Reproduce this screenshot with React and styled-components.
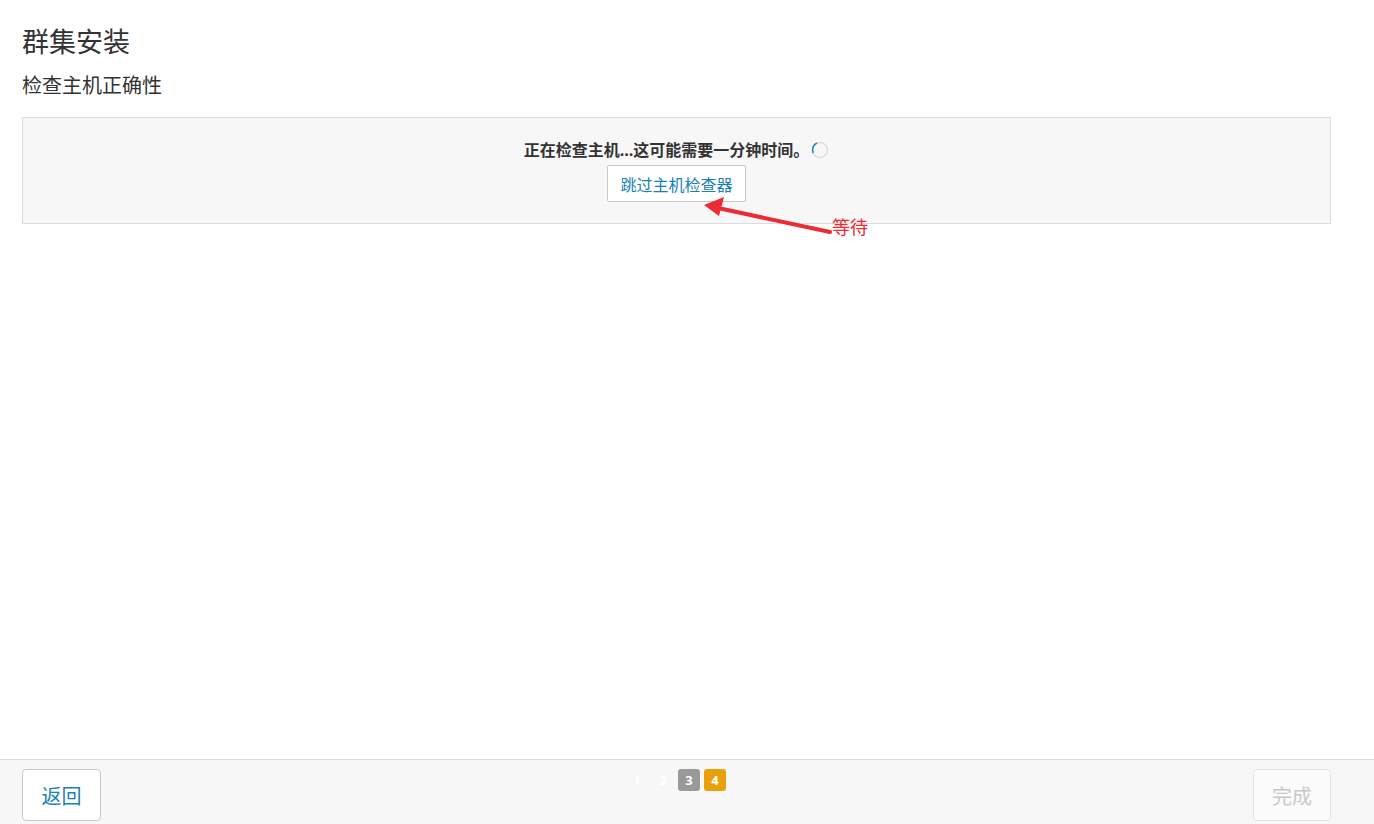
import React from "react";
import styled, { createGlobalStyle } from "styled-components";

const GlobalStyle = createGlobalStyle`
  *, *::before, *::after {
    box-sizing: border-box;
  }
  html, body {
    margin: 0;
    padding: 0;
    background: #fff;
    font-family: "Open Sans", "Noto Sans CJK SC", sans-serif;
    color: #333;
  }
`;

const Page = styled.div`
  height: 100vh;
  display: flex;
  flex-direction: column;
  overflow: hidden;
`;

const Main = styled.div`
  flex: 1;
  padding: 25px 43px 0 22px;
`;

const Title = styled.h1`
  margin: 0;
  font-size: 27px;
  line-height: 33px;
  font-weight: 400;
  color: #333;
`;

const SubTitle = styled.h2`
  margin: 16px 0 0;
  font-size: 20px;
  line-height: 24px;
  font-weight: 400;
  color: #333;
`;

const Panel = styled.div`
  position: relative;
  margin-top: 19px;
  background: #f7f7f7;
  border: 1px solid #dcdcdc;
  padding: 22px 0 21px;
  display: flex;
  flex-direction: column;
  align-items: center;
  gap: 5px;
`;

const Status = styled.div`
  display: flex;
  align-items: center;
  gap: 2px;
  font-size: 16px;
  line-height: 20px;
  font-weight: 700;
  color: #333;
`;

const SkipButton = styled.button`
  height: 37px;
  width: 139px;
  padding: 0;
  background: #fff;
  border: 1px solid #c8c8c8;
  border-radius: 2px;
  font-family: inherit;
  font-size: 16px;
  color: #1a7fb5;
  cursor: pointer;
`;

const Note = styled.div`
  position: absolute;
  left: 659px;
  top: 78px;
  display: flex;
  align-items: flex-start;
`;

const NoteText = styled.span`
  margin-top: 20px;
  margin-left: -2px;
  font-size: 18px;
  line-height: 22px;
  color: #ec2b35;
`;

const Footer = styled.div`
  height: 65px;
  flex-shrink: 0;
  border-top: 1px solid #dcdcdc;
  background: #f7f7f7;
  padding: 9px 43px 0 22px;
  display: flex;
  justify-content: space-between;
  align-items: flex-start;
`;

const NavButton = styled.button`
  height: 52px;
  width: ${(p) => p.$width}px;
  padding: 0;
  background: ${(p) => (p.disabled ? "#fbfbfb" : "#fff")};
  border: 1px solid ${(p) => (p.disabled ? "#e3e3e3" : "#c8c8c8")};
  border-radius: 4px;
  font-family: inherit;
  font-size: 20px;
  color: ${(p) => (p.disabled ? "#c8c8c8" : "#1a7fb5")};
`;

const Steps = styled.div`
  display: flex;
  gap: 4px;
  margin-right: 2px;
`;

const Step = styled.span`
  width: 22px;
  height: 22px;
  border-radius: 3px;
  display: flex;
  align-items: center;
  justify-content: center;
  font-family: "Open Sans", sans-serif;
  font-size: 13px;
  font-weight: 700;
  color: #fff;
  background: ${(p) => p.$bg};
`;

const Spinner = () => (
  <svg width="18" height="18" viewBox="0 0 18 18">
    <circle cx="9" cy="9" r="7.5" fill="none" stroke="#dedede" strokeWidth="1.6" />
    <path d="M2.2 12 A7.5 7.5 0 0 1 6 2.1" fill="none" stroke="#1e8cc4" strokeWidth="1.6" />
  </svg>
);

const Arrow = () => (
  <svg width="152" height="40" viewBox="0 0 152 40">
    <line x1="148" y1="36" x2="36" y2="12" stroke="#ec2b35" strokeWidth="4" strokeLinecap="round" />
    <polygon points="22,9 42,1 37,20" fill="#ec2b35" />
  </svg>
);

const steps = [
  { n: 1, bg: "transparent" },
  { n: 2, bg: "transparent" },
  { n: 3, bg: "#999" },
  { n: 4, bg: "#e8a00b" },
];

const App = () => {
  return (
    <Page>
      <GlobalStyle />
      <Main>
        <Title>群集安装</Title>
        <SubTitle>检查主机正确性</SubTitle>
        <Panel>
          <Status>
            正在检查主机...这可能需要一分钟时间。
            <Spinner />
          </Status>
          <SkipButton>跳过主机检查器</SkipButton>
          <Note>
            <Arrow />
            <NoteText>等待</NoteText>
          </Note>
        </Panel>
      </Main>
      <Footer>
        <NavButton $width={79}>返回</NavButton>
        <Steps>
          {steps.map((s) => (
            <Step key={s.n} $bg={s.bg}>{s.n}</Step>
          ))}
        </Steps>
        <NavButton $width={78} disabled>完成</NavButton>
      </Footer>
    </Page>
  );
};

export default App;
